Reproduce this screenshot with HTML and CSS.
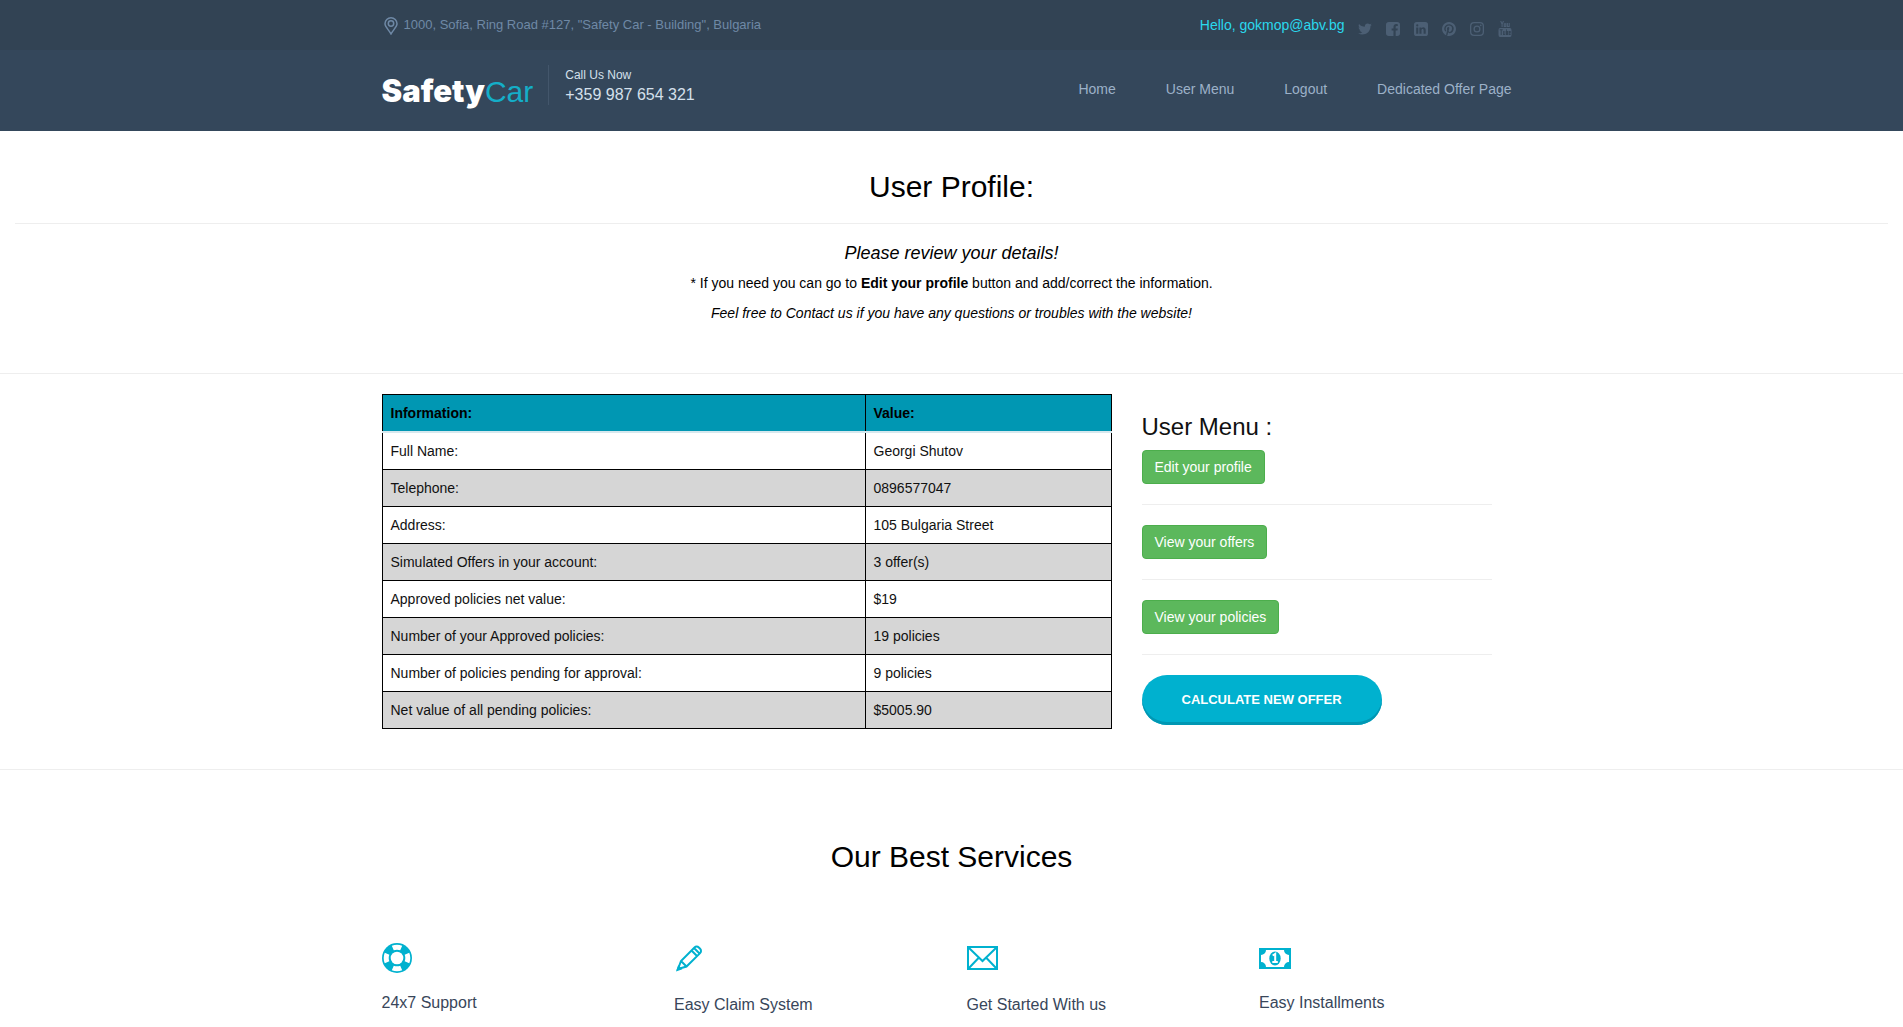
FILE: index.html
```html
<!DOCTYPE html>
<html lang="en">
<head>
<meta charset="utf-8">
<meta name="viewport" content="width=device-width, initial-scale=1">
<title>Safety Car - User Profile</title>
<link rel="stylesheet" href="styles.css">
</head>
<body>
<header class="site-header">
  <div class="topbar">
    <div class="container topbar-inner">
      <div class="address">
        <svg class="pin" viewBox="0 0 14 18" fill="none" stroke="currentColor" stroke-width="1.5" aria-hidden="true"><path d="M7 17C5 13 1 10 1 6.800a6 6 0 0 1 12 0C13 10 9 13 7 17z"/><circle cx="7" cy="6.500" r="2.700"/></svg>
        <span>1000, Sofia, Ring Road #127, "Safety Car - Building", Bulgaria</span>
      </div>
      <div class="account">
        <a class="hello" href="#">Hello, gokmop@abv.bg</a>
        <nav class="social" aria-label="Social media">
          <a href="#" aria-label="Twitter"><svg viewBox="100 128 1600 1536"><path d="M1684 408q-67 98-162 167 1 14 1 42 0 130-38 259.500t-115.500 248.500-184.500 210.500-258 146-323 54.500q-271 0-496-145 35 4 78 4 225 0 401-138-105-2-188-64.500t-114-159.500q33 5 61 5 43 0 85-11-112-23-185.500-111.500t-73.500-205.500v-4q68 38 146 41-66-44-105-115t-39-154q0-88 44-163 121 149 294.500 238.500t371.500 99.500q-8-38-8-74 0-134 94.500-228.500t228.500-94.500q140 0 236 102 109-21 205-78-37 115-142 178 93-10 186-50z"/></svg></a>
          <a href="#" aria-label="Facebook"><svg viewBox="128 128 1536 1536"><path d="M1376 128q119 0 203.500 84.500t84.500 203.500v960q0 119-84.500 203.500t-203.500 84.500h-188v-595h199l30-232h-229v-148q0-56 23.500-84t91.500-28l122-1v-207q-63-9-178-9-136 0-217.500 80t-81.500 226v171h-200v232h200v595h-532q-119 0-203.500-84.500t-84.500-203.500v-960q0-119 84.500-203.500t203.500-84.500h960z"/></svg></a>
          <a href="#" aria-label="LinkedIn"><svg viewBox="0 0 14 14"><path fill-rule="evenodd" d="M2.600 0h8.800A2.600 2.600 0 0 1 14 2.600v8.800a2.600 2.600 0 0 1-2.600 2.600H2.600A2.600 2.600 0 0 1 0 11.400V2.600A2.600 2.600 0 0 1 2.600 0zM2.200 5.400v6.300h2.100V5.400zM3.250 2.300a1.100 1.100 0 1 0 0 2.200 1.100 1.100 0 0 0 0-2.200zM5.400 5.400v6.300h2.100V8.200c0-1.600 2.100-1.600 2.100.1v3.400h2.100V8c0-3-3-3.400-4.200-1.700v-.9z"/></svg></a>
          <a href="#" aria-label="Pinterest"><svg viewBox="128 128 1536 1536"><path d="M1664 896q0 209-103 385.500t-279.500 279.500-385.500 103q-111 0-218-32 59-93 78-164 9-34 54-211 20 39 73 67.500t114 28.500q121 0 216-68.500t147-188.500 52-270q0-114-59.500-214t-172.500-163-255-63q-105 0-196 29t-154.500 77-109 110.500-67 129.500-21.500 134q0 104 40 183t117 111q30 12 38-20 2-7 8-31t8-30q6-23-11-43-51-61-51-151 0-151 104.500-259.500t273.500-108.500q151 0 235.500 82t84.500 213q0 170-68.500 289t-175.500 119q-61 0-98-43.500t-23-104.500q8-35 26.500-93.500t30-103 11.500-75.500q0-50-27-83t-77-33q-62 0-105 57t-43 142q0 73 25 122l-99 418q-17 70-13 177-206-91-333-281t-127-423q0-209 103-385.500t279.500-279.500 385.500-103 385.500 103 279.500 279.500 103 385.500z"/></svg></a>
          <a href="#" aria-label="Instagram"><svg viewBox="0 0 14 14"><g fill="none" stroke="currentColor" stroke-width="1.300"><rect x=".65" y=".65" width="12.700" height="12.700" rx="3.400"/><circle cx="7" cy="7" r="2.900"/></g><circle cx="10.700" cy="3.300" r=".9"/></svg></a>
          <a href="#" aria-label="YouTube"><svg class="youtube" viewBox="0 0 14 16"><path fill="none" stroke="currentColor" stroke-width="1.100" d="M2.700 0l1.400 3.200L5.500 0M4.100 3v3M6.300 2.700h1.500v2.800H6.300zM9.400 2v3.500h1.800M11.200 2v4"/><path fill-rule="evenodd" d="M2 7h10q1.500 0 1.500 2v5q0 2-1.500 2H2Q.5 16 .5 14V9Q.5 7 2 7zM1.700 8.300v1h1V14h1V9.300h1v-1zM5 10v4h2.300v-4h-.8v3.200h-.7V10zM8 8.300V14h2v-4H8.800V8.300zM10.600 10v4h2.100v-1.300h-1.200v-.5h1.200V10z"/></svg></a>
        </nav>
      </div>
    </div>
  </div>
  <div class="container mainbar">
    <div class="brand">
      <a class="logo" href="#"><strong>Safety</strong>Car</a>
      <div class="call"><span>Call Us Now</span><span class="phone">+359 987 654 321</span></div>
    </div>
    <nav class="main-nav" aria-label="Main">
      <a href="#">Home</a>
      <a href="#">User Menu</a>
      <a href="#">Logout</a>
      <a href="#">Dedicated Offer Page</a>
    </nav>
  </div>
</header>

<main>
  <section class="intro">
    <h1>User Profile:</h1>
    <hr>
    <p class="lead">Please review your details!</p>
    <p>* If you need you can go to <strong>Edit your profile</strong> button and add/correct the information.</p>
    <p class="contact">Feel free to Contact us if you have any questions or troubles with the website!</p>
  </section>

  <section class="profile">
    <div class="container profile-grid">
      <table class="details">
        <thead><tr><th scope="col">Information:</th><th scope="col">Value:</th></tr></thead>
        <tbody>
          <tr><td>Full Name:</td><td>Georgi Shutov</td></tr>
          <tr><td>Telephone:</td><td>0896577047</td></tr>
          <tr><td>Address:</td><td>105 Bulgaria Street</td></tr>
          <tr><td>Simulated Offers in your account:</td><td>3 offer(s)</td></tr>
          <tr><td>Approved policies net value:</td><td>$19</td></tr>
          <tr><td>Number of your Approved policies:</td><td>19 policies</td></tr>
          <tr><td>Number of policies pending for approval:</td><td>9 policies</td></tr>
          <tr><td>Net value of all pending policies:</td><td>$5005.90</td></tr>
        </tbody>
      </table>
      <aside class="user-menu">
        <h2>User Menu :</h2>
        <button type="button" class="btn">Edit your profile</button>
        <hr>
        <button type="button" class="btn">View your offers</button>
        <hr>
        <button type="button" class="btn">View your policies</button>
        <hr>
        <button type="button" class="btn-offer">CALCULATE NEW OFFER</button>
      </aside>
    </div>
  </section>

  <section class="services">
    <h2>Our Best Services</h2>
    <div class="services-grid">
      <article class="service">
        <svg width="30" height="30" viewBox="0 0 30 30" aria-hidden="true"><circle class="fill" cx="15" cy="15" r="15"/><circle class="gap" cx="15" cy="15" r="10.800" pathLength="360" stroke-dasharray="46 44" stroke-dashoffset="23"/><circle class="paper" cx="15" cy="15" r="6.300"/></svg>
        <h3>24x7 Support</h3>
      </article>
      <article class="service">
        <svg width="30" height="32" viewBox="0 0 30 32" aria-hidden="true"><g class="line"><path d="M4 26l3-8L20.500 4.500a3 3 0 0 1 4.300 0l1.300 1.300a3 3 0 0 1 0 4.300L12.500 23.500zM7 18l5.500 5.500M17.500 7.500l5.500 5.500M20 5l5.500 5.500"/></g><path class="fill" d="M2 28.500l2.200-6.500 4.200 4.200z"/></svg>
        <h3>Easy Claim System</h3>
      </article>
      <article class="service">
        <svg width="31" height="32" viewBox="0 0 31 32" aria-hidden="true"><g class="line"><path d="M1 4h29v22H1zM1.500 4.500l14 13.500 14-13.500M1.500 25.500l10.500-11M29.500 25.500L19 14.500"/></g></svg>
        <h3>Get Started With us</h3>
      </article>
      <article class="service">
        <svg width="32" height="30" viewBox="0 0 32 30" aria-hidden="true"><path class="fill" fill-rule="evenodd" d="M0 5h32v21H0zM7 7a5 5 0 0 1-5 5v7a5 5 0 0 1 5 5h18a5 5 0 0 1 5-5v-7a5 5 0 0 1-5-5z"/><ellipse class="fill" cx="16" cy="15.500" rx="5.700" ry="7"/><path class="numeral" d="M13.700 12.500l2.500-1.700v8.200M13.300 19h5.500"/></svg>
        <h3>Easy Installments</h3>
      </article>
    </div>
  </section>
</main>
</body>
</html>
```
FILE: styles.css
```css
* { box-sizing: border-box; }

body {
  margin: 0;
  background: #fff;
  color: #000;
  font: 14px/20px "Liberation Sans", Arial, sans-serif;
}

a { color: inherit; text-decoration: none; }
h1, h2, h3, p { margin: 0; font-weight: 400; }
hr { width: 100%; height: 1px; margin: 0; border: 0; background: #eee; }

.container { width: 100%; max-width: 1170px; margin: 0 auto; padding: 0 25px 0 15px; }

/* Header */
.site-header { background: #34475b; }
.topbar { background: #324354; }
.topbar-inner { display: flex; justify-content: space-between; height: 50px; }
.address { display: flex; gap: 6px; padding: 15px 0 0 2px; color: #6f89a6; font-size: 13px; }
.pin { width: 14px; height: 18px; margin-top: 2px; }
.account { display: flex; gap: 13px; padding-top: 15px; }
.hello { color: #2ad8ee; }
.social { display: flex; align-items: center; gap: 14px; height: 28px; color: #4c5f74; }
.social a, .social svg { display: block; }
.social svg { width: 14px; height: 14px; fill: currentColor; }
.social .youtube { height: 16px; }

.mainbar { display: flex; justify-content: space-between; height: 81px; }
.brand { display: flex; padding-top: 15px; }
.logo { padding-right: 15px; color: #14aec8; font-size: 30px; line-height: 52px; }
.logo strong { color: #fff; font-family: Inter, sans-serif; font-size: 31px; font-weight: 900; }
.call { display: flex; flex-direction: column; height: 40px; padding-left: 16px; border-left: 1px solid #43566b; color: #d5e0ec; font-size: 12px; }
.phone { font-size: 16px; }
.main-nav { display: flex; gap: 50px; padding-top: 29px; color: #9cb1c8; }

/* Introduction */
.intro { padding: 36px 15px 50px; border-bottom: 1px solid #eee; text-align: center; }
.intro h1 { font-size: 30px; line-height: 40px; }
.intro hr { margin: 16px 0 19px; }
.intro p { margin-bottom: 10px; }
.intro .lead { font-size: 18px; font-style: italic; }
.intro .contact { margin: 0; font-style: italic; }

/* Profile details */
.profile { padding: 20px 0 40px; border-bottom: 1px solid #eee; }
.profile-grid { display: grid; grid-template-columns: minmax(0, 73fr) minmax(0, 35fr); gap: 30px; padding-right: 45px; }
.details { width: 100%; border-collapse: collapse; align-self: start; }
.details th, .details td { padding: 8px; border: 1px solid #000; text-align: left; }
.details th { background: #0097b3; border-bottom: 2px solid #d6e8ee; }
.details th:first-child { width: 483px; }
.details td { color: #111; }
.details tbody tr:nth-child(even) { background: #d6d6d6; }

.user-menu { display: flex; flex-direction: column; align-items: flex-start; gap: 20px; padding-top: 20px; }
.user-menu h2 { margin-bottom: -10px; color: #111; font-size: 24px; line-height: 26px; }
.btn { height: 34px; padding: 0 12px; border: 1px solid #4cae4c; border-radius: 4px; background: #5cb85c; color: #fff; font: inherit; }
.btn-offer { height: 50px; padding: 0 40px; border: 0; border-radius: 25px; box-shadow: inset 0 -3px #0097b3; background: #00b1cf; color: #fff; font: inherit; font-size: 13px; font-weight: 700; }

/* Services */
.services { padding: 67px 0 20px; }
.services h2 { font-size: 30px; line-height: 40px; text-align: center; }
.services-grid { display: grid; grid-template-columns: repeat(4, minmax(0, 1fr)); max-width: 1170px; margin: 0 auto; padding-top: 66px; }
.service { padding: 0 15px; }
.service svg { display: block; }
.service h3 { padding-top: 20px; color: #38465a; font-size: 16px; }
.fill { fill: #00b1cf; }
.paper { fill: #fff; }
.gap { fill: none; stroke: #fff; stroke-width: 5; }
.line { fill: none; stroke: #00b1cf; stroke-width: 2; }
.numeral { fill: none; stroke: #fff; stroke-width: 2; }
```
